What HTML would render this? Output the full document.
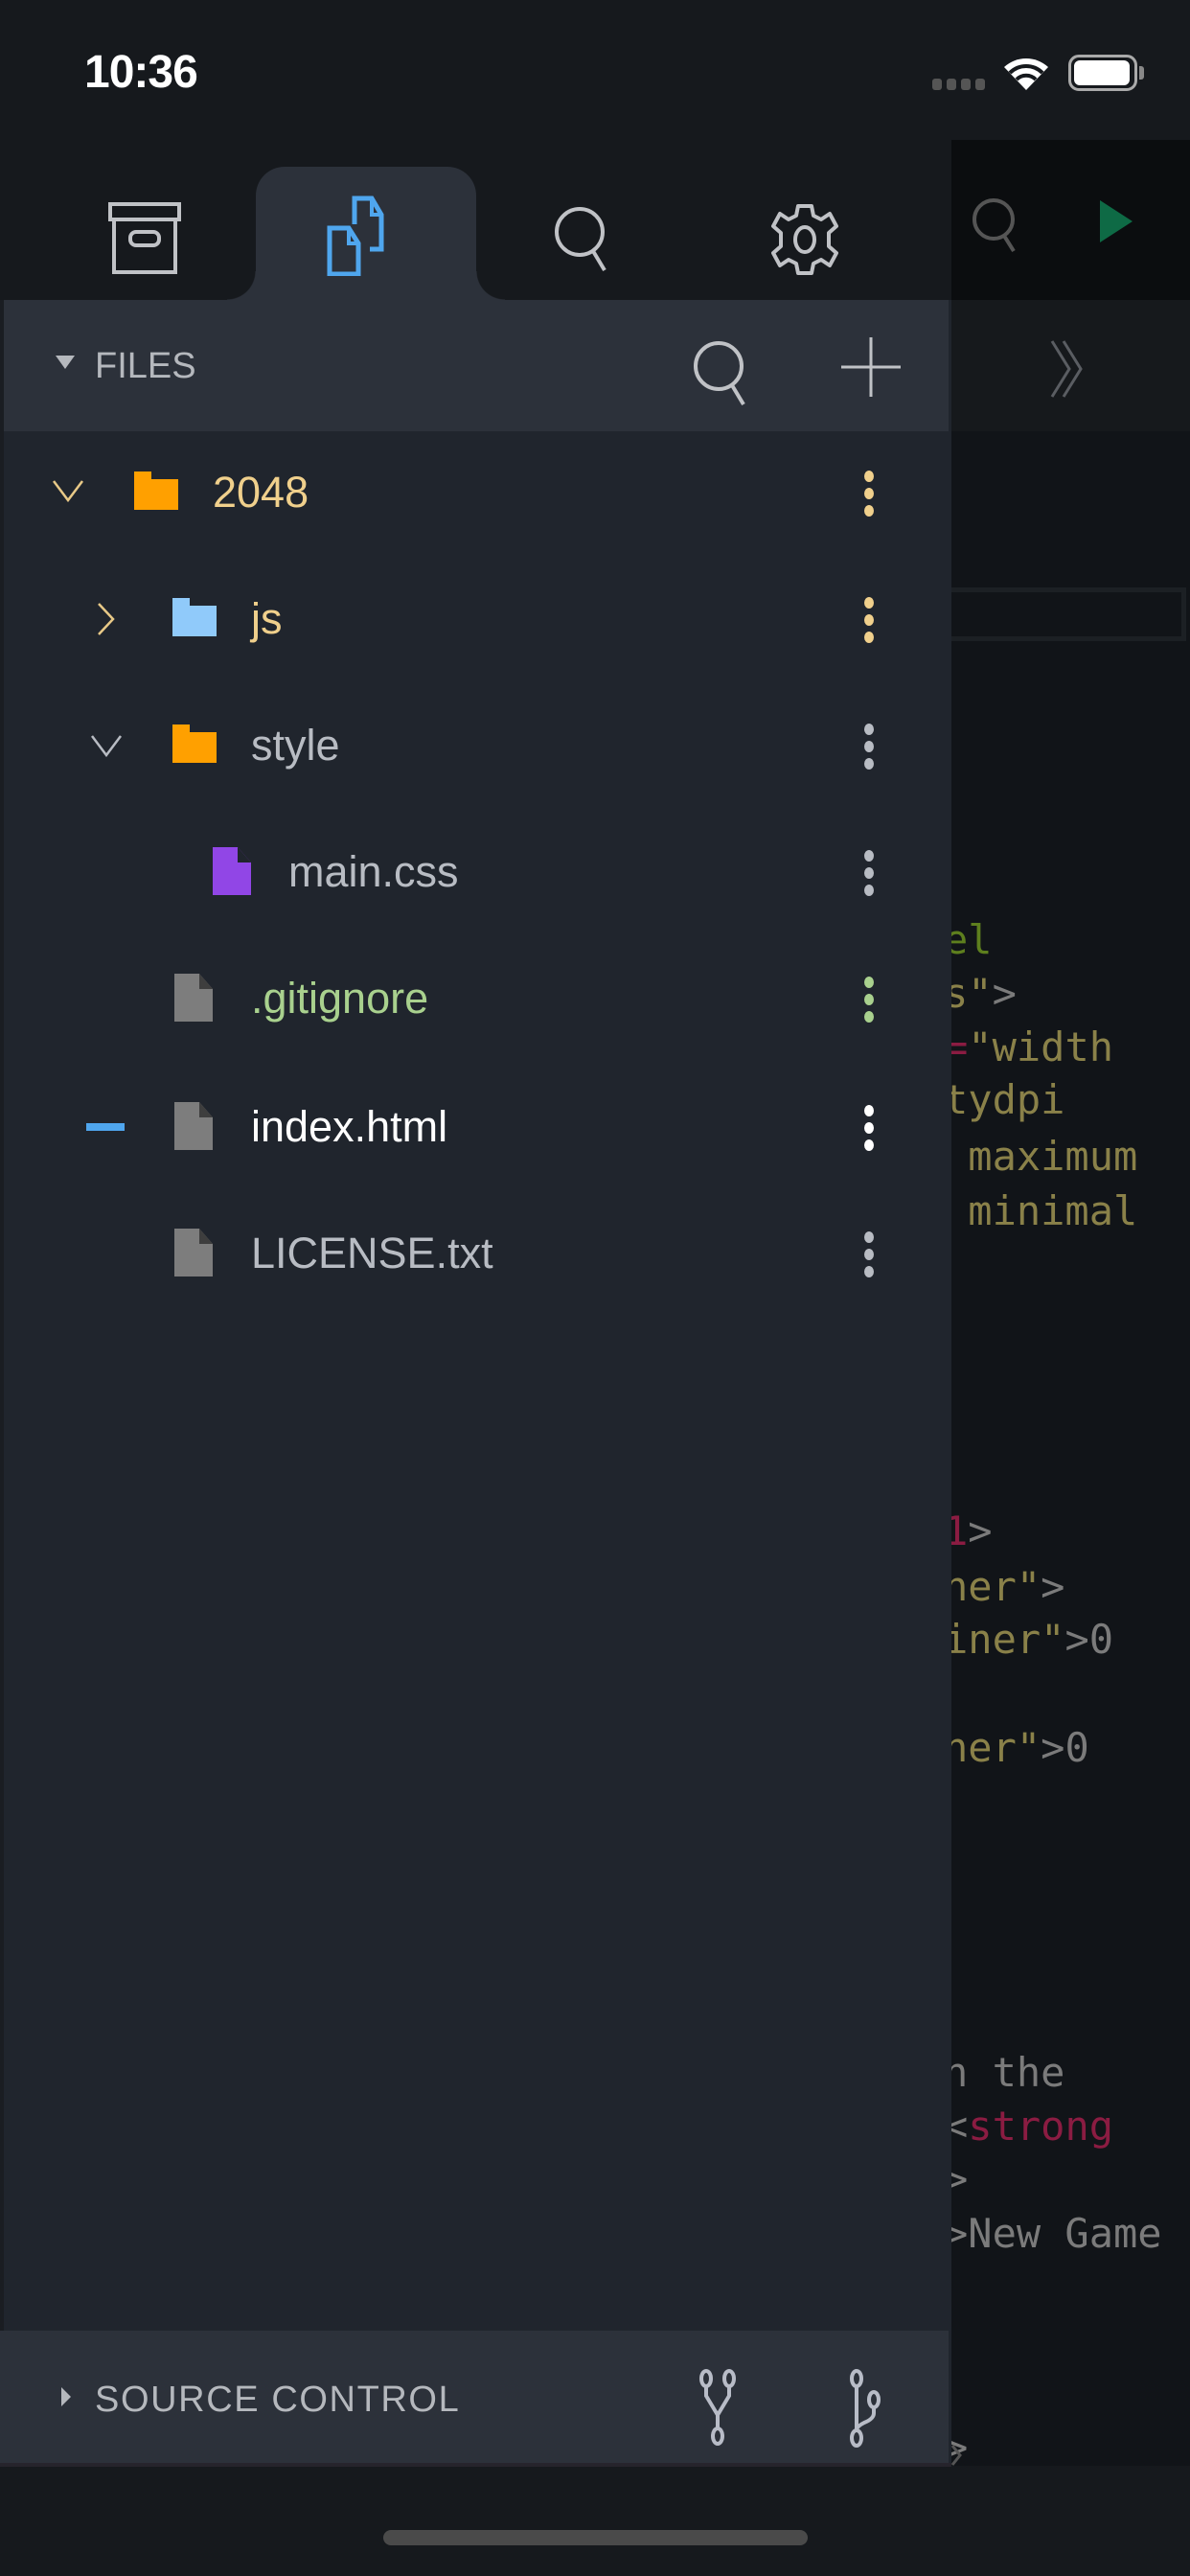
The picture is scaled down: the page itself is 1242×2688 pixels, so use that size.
<!DOCTYPE html>
<html><head><meta charset="utf-8"><style>
*{margin:0;padding:0;box-sizing:border-box}
body{width:1242px;height:2688px;background:#16191d;position:relative;overflow:hidden;font-family:"Liberation Sans",sans-serif}
.abs{position:absolute}
.code{position:absolute;left:993px;top:146px;width:249px;height:2427px;background:#111418;overflow:hidden}
.cl{position:absolute;font-family:"DejaVu Sans Mono","Liberation Mono",monospace;font-size:42px;white-space:pre;line-height:56px}
.y{color:#8a8149}.g{color:#7b7b7b}.r{color:#8b1c42}.gr{color:#5e7f1e}
.panel{position:absolute;left:0;top:313px;width:993px;height:2260px;background:#20252d}
.row{position:absolute;left:0;width:993px;height:132px}
.name{position:absolute;font-size:45px;line-height:132px;top:0}
.dots{position:absolute;left:902px;top:43px;width:10px;height:48px}
.dots i{position:absolute;left:0;width:10px;height:12px;border-radius:50%}
</style></head><body>
<!-- status bar -->
<div class="abs" style="left:88px;top:48px;color:#fff;font-weight:bold;font-size:48px;letter-spacing:-1px">10:36</div>
<div class="abs" style="left:973px;top:82px;width:57px;height:14px">
<i class="abs" style="left:0;top:0;width:10px;height:12px;background:#555;border-radius:3px"></i>
<i class="abs" style="left:15px;top:0;width:10px;height:12px;background:#555;border-radius:3px"></i>
<i class="abs" style="left:30px;top:0;width:10px;height:12px;background:#555;border-radius:3px"></i>
<i class="abs" style="left:45px;top:0;width:10px;height:12px;background:#555;border-radius:3px"></i>
</div>
<svg class="abs" style="left:1046px;top:56px" width="50" height="40" viewBox="0 0 50 40"><path d="M25 38 L2 14 A34 34 0 0 1 48 14 Z" fill="#fff"/><path d="M8 20 A24 24 0 0 1 42 20" stroke="#16191d" stroke-width="4" fill="none"/><path d="M15 27 A14 14 0 0 1 35 27" stroke="#16191d" stroke-width="4" fill="none"/></svg>
<div class="abs" style="left:1115px;top:57px;width:72px;height:38px;border:3px solid #aaa;border-radius:11px"></div>
<div class="abs" style="left:1121px;top:63px;width:58px;height:26px;background:#fff;border-radius:6px"></div>
<div class="abs" style="left:1189px;top:69px;width:5px;height:14px;background:#888;border-radius:0 3px 3px 0"></div>

<!-- right code header -->
<div class="abs" style="left:993px;top:146px;width:249px;height:167px;background:#0b0d0f"></div>
<svg class="abs" style="left:1008px;top:200px" width="60" height="70" viewBox="0 0 60 70"><circle cx="29" cy="29" r="20" stroke="#555" stroke-width="4" fill="none"/><line x1="40" y1="46" x2="50" y2="62" stroke="#555" stroke-width="4"/></svg>
<svg class="abs" style="left:1145px;top:206px" width="40" height="50" viewBox="0 0 40 50"><path d="M3 3 L37 25 L3 47Z" fill="#0e6a45"/></svg>
<div class="abs" style="left:993px;top:313px;width:249px;height:137px;background:#16191c"></div>
<svg class="abs" style="left:1090px;top:350px" width="50" height="70" viewBox="0 0 50 70"><path d="M8 6 L26 35 L8 64 M20 6 L38 35 L20 64" stroke="#5a5d62" stroke-width="3" fill="none"/></svg>

<div class="code" style="top:450px;height:2123px">
<div class="abs" style="left:-5px;top:163px;width:250px;height:56px;border:5px solid #1c2024;background:#111418"></div>
<div class="cl gr" style="left:-8px;top:503px">el</div>
<div class="cl" style="left:-8px;top:559px"><span class="y">s"</span><span class="g">&gt;</span></div>
<div class="cl" style="left:-8px;top:615px"><span class="r">=</span><span class="y">"width</span></div>
<div class="cl y" style="left:-8px;top:670px">tydpi</div>
<div class="cl y" style="left:-8px;top:729px"> maximum</div>
<div class="cl y" style="left:-8px;top:786px"> minimal</div>
<div class="cl" style="left:-8px;top:1120px"><span class="r">1</span><span class="g">&gt;</span></div>
<div class="cl" style="left:-8px;top:1178px"><span class="y">ner"</span><span class="g">&gt;</span></div>
<div class="cl" style="left:-8px;top:1233px"><span class="y">iner"</span><span class="g">&gt;0</span></div>
<div class="cl" style="left:-8px;top:1346px"><span class="y">ner"</span><span class="g">&gt;0</span></div>
<div class="cl g" style="left:-8px;top:1685px">n the</div>
<div class="cl" style="left:-8px;top:1741px"><span class="g">&lt;</span><span class="r">strong</span></div>
<div class="cl g" style="left:-8px;top:1796px">&gt;</div>
<div class="cl g" style="left:-8px;top:1853px">&gt;New Game</div>
<div class="cl g" style="left:-8px;top:2076px">&gt;</div>
</div>

<!-- tabs -->
<div class="abs" style="left:267px;top:174px;width:230px;height:139px;background:#2c313a;border-radius:30px 30px 0 0"></div>
<div class="abs" style="left:237px;top:283px;width:30px;height:30px;background:radial-gradient(circle at 0 0,#16191d 29px,#2c313a 30px)"></div>
<div class="abs" style="left:497px;top:283px;width:30px;height:30px;background:radial-gradient(circle at 100% 0,#16191d 29px,#2c313a 30px)"></div>
<svg class="abs" style="left:112px;top:210px" width="80" height="76" viewBox="0 0 80 76"><rect x="3" y="3" width="72" height="16" stroke="#c0c2c6" stroke-width="4" fill="none"/><rect x="7" y="19" width="64" height="55" stroke="#c0c2c6" stroke-width="4" fill="none"/><rect x="24" y="32" width="30" height="14" rx="6" stroke="#c0c2c6" stroke-width="4" fill="none"/></svg>
<svg class="abs" style="left:340px;top:204px" width="80" height="84" viewBox="0 0 80 84"><path d="M30 30 V3 H48 L58 20 V56 H46" stroke="#4fa6ee" stroke-width="5" fill="none"/><path d="M48 3 V20 H58" stroke="#4fa6ee" stroke-width="4" fill="none"/><path d="M4 34 H24 L34 50 V82 H4 Z" stroke="#4fa6ee" stroke-width="5" fill="none"/><path d="M24 34 V50 H34" stroke="#4fa6ee" stroke-width="4" fill="none"/></svg>
<svg class="abs" style="left:575px;top:210px" width="70" height="80" viewBox="0 0 70 80"><circle cx="30" cy="32" r="24" stroke="#c0c2c6" stroke-width="4" fill="none"/><line x1="44" y1="52" x2="56" y2="72" stroke="#c0c2c6" stroke-width="4"/></svg>
<svg class="abs" style="left:803px;top:212px" width="74" height="76" viewBox="0 0 74 76"><path d="M30 3 H44 L46 13 L54 17 L63 11 L70 24 L62 31 V45 L70 52 L63 65 L54 59 L46 63 L44 73 H30 L28 63 L20 59 L11 65 L4 52 L12 45 V31 L4 24 L11 11 L20 17 L28 13 Z" stroke="#c0c2c6" stroke-width="4" fill="none" stroke-linejoin="round"/><ellipse cx="37" cy="38" rx="10" ry="13" stroke="#c0c2c6" stroke-width="4" fill="none"/></svg>

<!-- panel -->
<div class="panel"></div>
<div class="abs" style="left:0;top:313px;width:990px;height:137px;background:#2c313a"></div>
<div class="abs" style="left:0;top:313px;width:4px;height:2260px;background:#1a1d22"></div>
<svg class="abs" style="left:57px;top:370px" width="22" height="16"><path d="M1 1 H21 L11 15Z" fill="#b5b8bd"/></svg>
<div class="abs" style="left:99px;top:358px;font-size:38px;color:#b5b8bd;line-height:48px">FILES</div>
<svg class="abs" style="left:720px;top:350px" width="70" height="78" viewBox="0 0 70 78"><circle cx="30" cy="32" r="24" stroke="#c0c2c6" stroke-width="4" fill="none"/><line x1="44" y1="52" x2="56" y2="72" stroke="#c0c2c6" stroke-width="4"/></svg>
<svg class="abs" style="left:878px;top:352px" width="62" height="62"><path d="M31 0 V62 M0 31 H62" stroke="#c0c2c6" stroke-width="3"/></svg>

<!-- rows -->
<div class="row" style="top:448px">
<svg class="abs" style="left:54px;top:52px" width="34" height="24"><path d="M2 2 L17 22 L32 2" stroke="#e8c987" stroke-width="2.5" fill="none"/></svg>
<svg class="abs" style="left:140px;top:44px" width="46" height="40"><path d="M0 0 H18 V8 H46 V40 H0Z" fill="#ffa000"/></svg>
<div class="name" style="left:222px;color:#f0d08c">2048</div>
<div class="dots"><i style="top:0;background:#f0d08c"></i><i style="top:18px;background:#f0d08c"></i><i style="top:36px;background:#f0d08c"></i></div>
</div>
<div class="row" style="top:580px">
<svg class="abs" style="left:100px;top:48px" width="22" height="36"><path d="M3 2 L18 18 L3 34" stroke="#e8c987" stroke-width="2.5" fill="none"/></svg>
<svg class="abs" style="left:180px;top:44px" width="46" height="40"><path d="M0 0 H18 V8 H46 V40 H0Z" fill="#90cafa"/></svg>
<div class="name" style="left:262px;color:#f0d08c">js</div>
<div class="dots"><i style="top:0;background:#f0d08c"></i><i style="top:18px;background:#f0d08c"></i><i style="top:36px;background:#f0d08c"></i></div>
</div>
<div class="row" style="top:712px">
<svg class="abs" style="left:94px;top:54px" width="34" height="24"><path d="M2 2 L17 22 L32 2" stroke="#b8bcc3" stroke-width="2.5" fill="none"/></svg>
<svg class="abs" style="left:180px;top:44px" width="46" height="40"><path d="M0 0 H18 V8 H46 V40 H0Z" fill="#ffa000"/></svg>
<div class="name" style="left:262px;color:#b8bcc3">style</div>
<div class="dots"><i style="top:0;background:#b8bcc3"></i><i style="top:18px;background:#b8bcc3"></i><i style="top:36px;background:#b8bcc3"></i></div>
</div>
<div class="row" style="top:844px">
<svg class="abs" style="left:222px;top:40px" width="40" height="50"><path d="M0 0 H26 L40 16 V50 H0Z" fill="#9146e6"/><path d="M26 0 V16 H40Z" fill="#20252d"/></svg>
<div class="name" style="left:301px;color:#b8bcc3">main.css</div>
<div class="dots"><i style="top:0;background:#b8bcc3"></i><i style="top:18px;background:#b8bcc3"></i><i style="top:36px;background:#b8bcc3"></i></div>
</div>
<div class="row" style="top:976px">
<svg class="abs" style="left:182px;top:40px" width="40" height="50"><path d="M0 0 H26 L40 16 V50 H0Z" fill="#7d7d7d"/><path d="M26 0 V16 H40Z" fill="#3e3e3e"/></svg>
<div class="name" style="left:262px;color:#a9d18e">.gitignore</div>
<div class="dots"><i style="top:0;background:#a9d18e"></i><i style="top:18px;background:#a9d18e"></i><i style="top:36px;background:#a9d18e"></i></div>
</div>
<div class="row" style="top:1110px">
<div class="abs" style="left:90px;top:62px;width:40px;height:8px;background:#4fa6ee"></div>
<svg class="abs" style="left:182px;top:40px" width="40" height="50"><path d="M0 0 H26 L40 16 V50 H0Z" fill="#7d7d7d"/><path d="M26 0 V16 H40Z" fill="#3e3e3e"/></svg>
<div class="name" style="left:262px;color:#ffffff">index.html</div>
<div class="dots"><i style="top:0;background:#fff"></i><i style="top:18px;background:#fff"></i><i style="top:36px;background:#fff"></i></div>
</div>
<div class="row" style="top:1242px">
<svg class="abs" style="left:182px;top:40px" width="40" height="50"><path d="M0 0 H26 L40 16 V50 H0Z" fill="#7d7d7d"/><path d="M26 0 V16 H40Z" fill="#3e3e3e"/></svg>
<div class="name" style="left:262px;color:#b8bcc3">LICENSE.txt</div>
<div class="dots"><i style="top:0;background:#b8bcc3"></i><i style="top:18px;background:#b8bcc3"></i><i style="top:36px;background:#b8bcc3"></i></div>
</div>

<!-- source control -->
<div class="abs" style="left:0;top:2432px;width:990px;height:138px;background:#2c313a"></div>
<div class="abs" style="left:0;top:2570px;width:993px;height:4px;background:#26242c"></div>
<svg class="abs" style="left:63px;top:2490px" width="12" height="22"><path d="M1 1 L11 11 L1 21Z" fill="#b5b8bd"/></svg>
<div class="abs" style="left:99px;top:2480px;font-size:38px;color:#b5b8bd;line-height:48px;letter-spacing:1.6px">SOURCE CONTROL</div>
<svg class="abs" style="left:726px;top:2470px" width="56" height="84" viewBox="0 0 56 84"><g stroke="#b8bcc7" stroke-width="4" fill="none"><ellipse cx="11" cy="12" rx="5" ry="8"/><ellipse cx="35" cy="12" rx="5" ry="8"/><ellipse cx="23" cy="72" rx="5" ry="8"/><path d="M11 20 V30 L23 50 V64 M35 20 V30 L23 50"/></g></svg>
<svg class="abs" style="left:884px;top:2470px" width="56" height="86" viewBox="0 0 56 86"><g stroke="#b8bcc7" stroke-width="4" fill="none"><ellipse cx="10" cy="12" rx="5" ry="8"/><ellipse cx="28" cy="34" rx="5" ry="8"/><ellipse cx="10" cy="74" rx="5" ry="8"/><path d="M10 20 V66 M28 42 V48 Q28 54 18 58 Q10 62 10 66"/></g></svg>
<svg class="abs" style="left:993px;top:2550px" width="14" height="26"><path d="M1 2 L9 12 L1 22" stroke="#555" stroke-width="3" fill="none"/></svg>

<div class="abs" style="left:400px;top:2640px;width:443px;height:16px;background:#4a4a4a;border-radius:8px"></div>
</body></html>
